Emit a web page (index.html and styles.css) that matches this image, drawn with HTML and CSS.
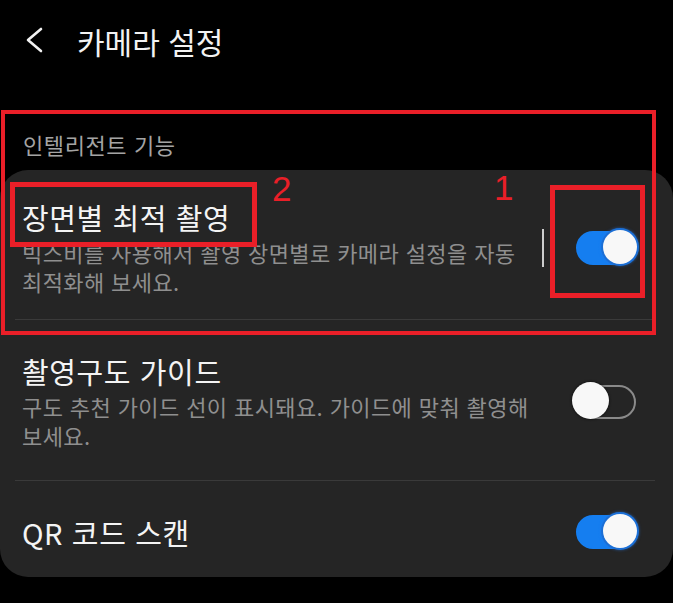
FILE: index.html
```html
<!DOCTYPE html>
<html lang="ko">
<head>
  <meta charset="UTF-8">
  <title>카메라 설정</title>
  <link rel="stylesheet" href="styles.css">
</head>
<body>
  <div class="header">
    <svg class="back" width="18" height="26" viewBox="0 0 18 26">
      <polyline points="16,2 3,13 16,24" fill="none" stroke="#f2f2f2" stroke-width="2.6" stroke-linecap="round" stroke-linejoin="round"/>
    </svg>
    <h1 class="title">카메라 설정</h1>
  </div>

  <div class="section-label">인텔리전트 기능</div>

  <div class="card">
    <div class="row first">
      <div class="text">
        <div class="row-title">장면별 최적 촬영</div>
        <div class="row-desc">빅스비를 사용해서 촬영 장면별로 카메라 설정을 자동 최적화해 보세요.</div>
      </div>
      <div class="vline"></div>
      <div class="toggle on"><span class="thumb"></span></div>
    </div>
    <div class="row">
      <div class="text">
        <div class="row-title">촬영구도 가이드</div>
        <div class="row-desc">구도 추천 가이드 선이 표시돼요. 가이드에 맞춰 촬영해 보세요.</div>
      </div>
      <div class="toggle"><span class="thumb"></span></div>
    </div>
    <div class="row last">
      <div class="text">
        <div class="row-title">QR 코드 스캔</div>
      </div>
      <div class="toggle on"><span class="thumb"></span></div>
    </div>
  </div>

  <!-- 빨간 표시 -->
  <div class="mark mark-outer"></div>
  <div class="mark mark-1"></div>
  <div class="mark mark-2"></div>
  <div class="mark-num num-1">1</div>
  <div class="mark-num num-2">2</div>
</body>
</html>
```

FILE: styles.css
```css
body {
  margin: 0;
  background: #000;
  color: #f3f3f3;
  font-family: 'Noto Sans CJK KR', 'Noto Sans', sans-serif;
  position: relative;
  height: 603px;
  overflow: hidden;
}

.header {
  height: 82px;
  display: flex;
  align-items: center;
  padding-left: 25px;
  gap: 34px;
}

.back {
  margin-top: -2px;
}

.title {
  margin: 0;
  font-size: 30px;
  font-weight: 400;
  line-height: 36px;
  color: #f2f2f2;
}

.section-label {
  padding: 47px 0 11px 23px;
  font-size: 22px;
  letter-spacing: 0.6px;
  line-height: 30px;
  color: #a4a4a4;
}

.card {
  background: #252525;
  border-radius: 28px;
  padding: 0 18px 0 15px;
}

.row {
  display: flex;
  align-items: center;
  padding: 33px 19px 30px 7px;
  border-top: 1px solid #3a3a3a;
}

.row.first {
  border-top: none;
  padding-top: 29px;
  padding-bottom: 23px;
}

.row.last {
  padding-top: 33px;
  padding-bottom: 27px;
}

.text {
  flex: 1;
  min-width: 0;
}

.row-title {
  font-size: 29px;
  letter-spacing: 0.6px;
  line-height: 36px;
  color: #f4f4f4;
}

.row-desc {
  margin-top: 3px;
  font-size: 22px;
  letter-spacing: 0.4px;
  line-height: 29px;
  color: #8f8f8f;
  padding-right: 10px;
  word-break: keep-all;
}

.vline {
  width: 2px;
  height: 38px;
  background: #cdcdcd;
  margin: 0 32px 0 0;
}

.toggle {
  position: relative;
  width: 56px;
  height: 30px;
  border: 2px solid #8a8a8a;
  border-radius: 17px;
  flex-shrink: 0;
}

.toggle .thumb {
  position: absolute;
  top: -5px;
  left: -6px;
  width: 37px;
  height: 37px;
  border-radius: 50%;
  background: #f8f8f8;
  box-shadow: 0 0 3px rgba(0, 0, 0, 0.8);
}

.toggle.on {
  background: #157ef0;
  border-color: #157ef0;
}

.toggle.on .thumb {
  left: auto;
  right: -3px;
  top: -3px;
  width: 34px;
  height: 34px;
  box-shadow: 0 0 0 2px #1b6fd6, 0 0 3px 2px rgba(40, 120, 230, 0.6);
}

/* 빨간 표시 */
.mark {
  position: absolute;
  border: 4px solid #ea1f28;
}

.mark-outer {
  left: 1px;
  top: 110px;
  width: 647px;
  height: 217px;
}

.mark-1 {
  left: 550px;
  top: 185px;
  width: 85px;
  height: 103px;
  border-width: 5px;
}

.mark-2 {
  left: 10px;
  top: 182px;
  width: 237px;
  height: 55px;
  border-width: 5px;
}

.mark-num {
  position: absolute;
  color: #ea1f28;
  font-family: 'Liberation Sans', sans-serif;
  font-size: 35px;
  line-height: 1;
}

.num-1 {
  left: 494px;
  top: 170px;
}

.num-2 {
  left: 272px;
  top: 171px;
}
```
